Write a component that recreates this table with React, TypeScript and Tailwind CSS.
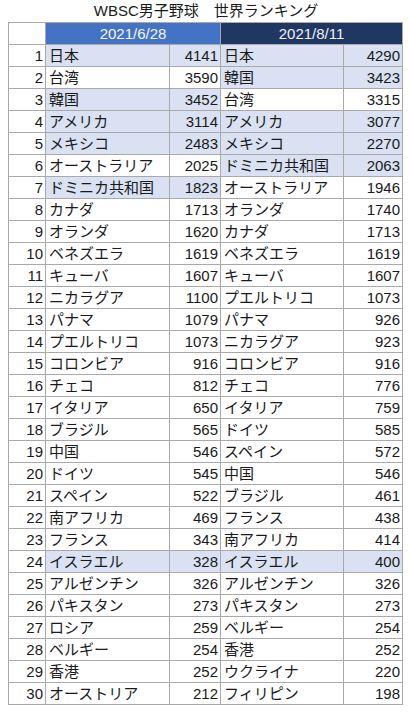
const rows: [string, number, string, number][] = [
  ["日本", 4141, "日本", 4290],
  ["台湾", 3590, "韓国", 3423],
  ["韓国", 3452, "台湾", 3315],
  ["アメリカ", 3114, "アメリカ", 3077],
  ["メキシコ", 2483, "メキシコ", 2270],
  ["オーストラリア", 2025, "ドミニカ共和国", 2063],
  ["ドミニカ共和国", 1823, "オーストラリア", 1946],
  ["カナダ", 1713, "オランダ", 1740],
  ["オランダ", 1620, "カナダ", 1713],
  ["ベネズエラ", 1619, "ベネズエラ", 1619],
  ["キューバ", 1607, "キューバ", 1607],
  ["ニカラグア", 1100, "プエルトリコ", 1073],
  ["パナマ", 1079, "パナマ", 926],
  ["プエルトリコ", 1073, "ニカラグア", 923],
  ["コロンビア", 916, "コロンビア", 916],
  ["チェコ", 812, "チェコ", 776],
  ["イタリア", 650, "イタリア", 759],
  ["ブラジル", 565, "ドイツ", 585],
  ["中国", 546, "スペイン", 572],
  ["ドイツ", 545, "中国", 546],
  ["スペイン", 522, "ブラジル", 461],
  ["南アフリカ", 469, "フランス", 438],
  ["フランス", 343, "南アフリカ", 414],
  ["イスラエル", 328, "イスラエル", 400],
  ["アルゼンチン", 326, "アルゼンチン", 326],
  ["パキスタン", 273, "パキスタン", 273],
  ["ロシア", 259, "ベルギー", 254],
  ["ベルギー", 254, "香港", 252],
  ["香港", 252, "ウクライナ", 220],
  ["オーストリア", 212, "フィリピン", 198],
];

// 東京五輪出場国
const olympic = ["日本", "韓国", "アメリカ", "メキシコ", "ドミニカ共和国", "イスラエル"];

const cell = "border border-[#a9a9a9] h-[22px] p-0 leading-none";

const App = () => {
  return (
    <div
      className="w-[410px] h-[717px] bg-white text-[15px] text-[#1a1a1a]"
      style={{ fontFamily: '"Liberation Sans", "Noto Sans CJK JP", sans-serif' }}
    >
      <div className="h-[22px] flex items-center justify-center pl-[2px] text-[15px]">WBSC男子野球　世界ランキング</div>
      <table className="ml-[8px] w-[394px] table-fixed border-collapse">
        <colgroup>
          <col className="w-[37px]" />
          <col className="w-[124px]" />
          <col className="w-[51px]" />
          <col className="w-[123px]" />
          <col className="w-[59px]" />
        </colgroup>
        <thead>
          <tr>
            <th className={`${cell} bg-white`}></th>
            <th colSpan={2} className={`${cell} bg-[#4472c4] text-[#f4f6fb] font-normal text-center`}>
              2021/6/28
            </th>
            <th colSpan={2} className={`${cell} bg-[#203764] text-[#eef1f8] font-normal text-center`}>
              2021/8/11
            </th>
          </tr>
        </thead>
        <tbody>
          {rows.map(([n1, s1, n2, s2], i) => {
            const hl1 = olympic.includes(n1) ? "bg-[#d9e1f2]" : "bg-white";
            const hl2 = olympic.includes(n2) ? "bg-[#d9e1f2]" : "bg-white";
            return (
              <tr key={i}>
                <td className={`${cell} text-right pr-[2px]`}>{i + 1}</td>
                <td className={`${cell} ${hl1} pl-[3px] whitespace-nowrap`}>{n1}</td>
                <td className={`${cell} ${hl1} text-right pr-[2px]`}>{s1}</td>
                <td className={`${cell} ${hl2} pl-[3px] whitespace-nowrap`}>{n2}</td>
                <td className={`${cell} ${hl2} text-right pr-[2px]`}>{s2}</td>
              </tr>
            );
          })}
        </tbody>
      </table>
    </div>
  );
};

export default App;
